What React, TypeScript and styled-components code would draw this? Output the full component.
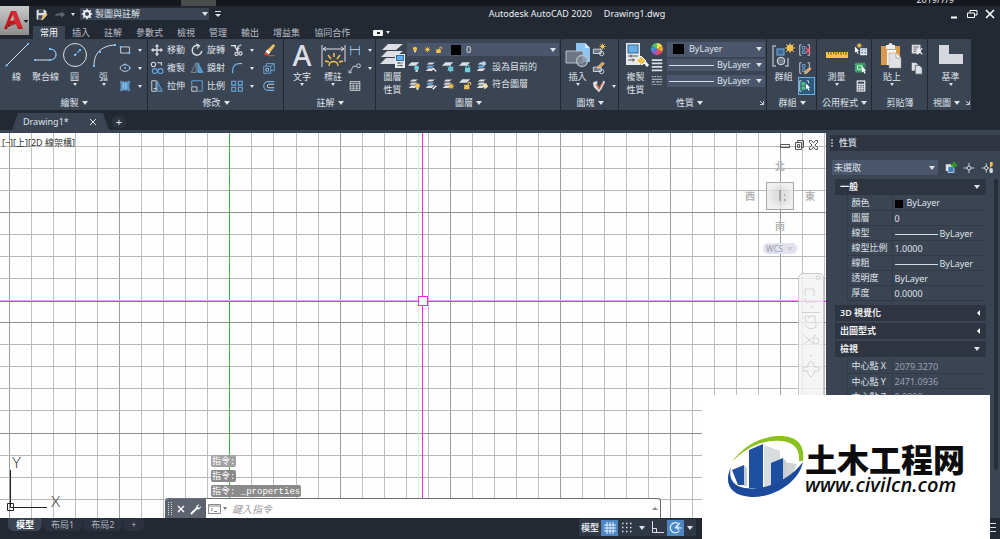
import React from 'react';
import styled, { createGlobalStyle, css } from 'styled-components';

const color = {
  chrome: '#222933',
  panel: '#3b4453',
  section: '#2e3541',
  combo: '#4a566b',
  text: '#dfe3e9',
  dim: '#9aa2ae',
  blue: '#69aee6',
  white: '#dcdfe3',
  gold: '#f2c14e',
};

const Global = createGlobalStyle`
  * { box-sizing: border-box; }
  body { margin: 0; background: ${color.chrome}; }
  body, button, select, input {
    font-family: "Noto Sans", "Noto Sans CJK TC", sans-serif;
    font-size: 9px;
    line-height: 12px;
    color: ${color.text};
  }
  button, select, input { margin: 0; padding: 0; border: 0; background: none; outline: 0; }
`;

/* ---------- icon artwork ---------- */

const W = color.white;
const B = color.blue;
const G = color.gold;

const Sheets = ({ mid = W, blue = false }: { mid?: string; blue?: boolean }) => (
  <g>
    <path d="M5 9.500h7l-3 3H2z" fill={W} />
    <path d="M5 6h7l-3 3H2z" fill={blue ? B : mid} stroke={color.panel} strokeWidth=".6" />
    <path d="M6 2.500h7l-3.500 3H2.500z" fill={W} stroke={color.panel} strokeWidth=".6" />
  </g>
);
const Sheet = () => <path d="M5 2.500h9l-4 4H1z" fill={W} />;
const Bulb = ({ x = 0, y = 0, c = G }: { x?: number; y?: number; c?: string }) => (
  <g transform={`translate(${x} ${y})`}>
    <circle cx="3" cy="3" r="2.800" fill={c} />
    <path d="M1.700 5.400h2.600v2.200H1.700z" fill="#e8e2d0" />
  </g>
);
const Sun = ({ x, y, r = 2 }: { x: number; y: number; r?: number }) => (
  <g transform={`translate(${x} ${y})`} stroke={G} strokeWidth="1">
    <circle r={r} fill={G} />
    <path d={`M0 ${-r - 2}V${r + 2}M${-r - 2} 0H${r + 2}M${-r - 1} ${-r - 1}L${r + 1} ${r + 1}M${r + 1} ${-r - 1}L${-r - 1} ${r + 1}`} />
  </g>
);
const Lock = ({ x, y, c = G, open = false }: { x: number; y: number; c?: string; open?: boolean }) => (
  <g transform={`translate(${x} ${y})`}>
    <rect y="3" width="6" height="5" fill={c} />
    <path d={open ? 'M4.500 3V1.500a1.500 1.500 0 0 1 3 0V3' : 'M1.300 3V1.800a1.700 1.700 0 0 1 3.400 0V3'} fill="none" stroke={c} strokeWidth="1.200" />
  </g>
);
const Dot = ({ x, y }: { x: number; y: number }) => <rect x={x - 1} y={y - 1} width="2" height="2" fill="#6fc0ff" />;
const Cursor = ({ x, y }: { x: number; y: number }) => (
  <path transform={`translate(${x} ${y})`} d="M0 0l5 5H3l1.300 3-1.200.5L1.800 5.600 0 7z" fill="#fff" />
);
const Pencil = ({ x, y }: { x: number; y: number }) => (
  <path transform={`translate(${x} ${y})`} d="M6 0l2 2-5 5-2.500.700L1 5z" fill="#e8a14a" stroke="#fff" strokeWidth=".5" />
);

const art: Record<string, React.ReactNode> = {
  // 26 x 26 artwork
  line: <g><path d="M3 23L24 2" stroke={W} /><Dot x={2.5} y={23.5} /><Dot x={24} y={2} /></g>,
  polyline: <g fill="none"><path d="M2 18h15c8 0 8-11 0-11" stroke={W} /><path d="M17 18c8 0 8-11 0-11" stroke={B} /><Dot x={2} y={18} /><Dot x={17} y={18} /><Dot x={17} y={7} /></g>,
  circle: <g fill="none"><circle cx="13" cy="13" r="11.500" stroke={W} /><path d="M13 13l5-5" stroke={B} strokeWidth="1.500" strokeDasharray="2 1.500" /><Dot x={13} y={13} /><Dot x={18} y={8} /></g>,
  arc: <g fill="none"><path d="M3 24C3 12 9 4 24 3" stroke={W} /><Dot x={3} y={24} /><Dot x={9} y={10} /><Dot x={24} y={3} /></g>,
  textA: <text x="13" y="24" textAnchor="middle" fontFamily="Noto Sans" fontSize="29" fontWeight="500" fill={W}>A</text>,
  dim: <g fill="none" stroke={W}><path d="M2 3v22M25 3v17M3 7h21M6 5L3 7l3 2M21 5l3 2-3 2" /><path d="M14 11v4M8 13l3 4M20 13l-3 4M5 19l4 1M23 19l-4 1M9 24c0-6 9-6 9 0" stroke={G} strokeWidth="1.500" /></g>,
  layers: <g><path d="M7 15h18l-8 7H0z" fill={W} /><path d="M7 8.500h17l-8 7H0z" fill={W} stroke={color.panel} /><path d="M8 1.500h16l-8 7H1z" fill={W} stroke={color.panel} /><rect x="15" y="12" width="10" height="14" fill="#e9eef3" /><rect x="16.500" y="13.500" width="7" height="5" fill={B} stroke="#2a6db0" /><path d="M17 21h6M17 23.500h6M19 20v2M21 22.500v2" stroke="#555" strokeWidth=".8" /></g>,
  insert: <g><path d="M11 1h9l5 5v14H11z" fill="#8ec5f2" /><path d="M20 1v5h5" fill="#d3e8fa" /><path d="M1 9h17v12H1z" fill="#6d7685" stroke="#b9bec6" /><circle cx="17" cy="19" r="5.500" fill="#8089969c" stroke="#b9bec6" strokeWidth="1.300" /></g>,
  match: <g><rect x="3" y="1" width="14" height="22" fill="#e6e8ea" /><rect x="5" y="3" width="10" height="8" fill={B} stroke="#2f6a9c" /><path d="M5 14h10M5 18h7M8 12.500v3M10 16.500v3" stroke="#555" /><path d="M18 18l6 7 2-2-6-7z" fill="#fff" /><path d="M13 19l5-5 5 5-4 4z" fill={G} stroke="#fff" /></g>,
  group: <g fill="none"><path d="M5 4H2v20h3M14 24h3V16" stroke="#aeb4bd" strokeWidth="1.400" /><rect x="6" y="7" width="7" height="6" fill="#41698f" stroke={B} /><circle cx="10" cy="19" r="3.800" fill="#6d7685" stroke={W} /><Sun x={19} y={6} r={3} /></g>,
  ruler: <g><rect x="2" y="10" width="22" height="6" fill={G} /><path d="M4.500 10v2M7 10v3M9.500 10v2M12 10v3M14.500 10v2M17 10v3M19.500 10v2M22 10v3" stroke="#7a5a12" /></g>,
  paste: <g><path d="M2 4h19v19H2z" fill="#d99a4c" /><path d="M7 3h2.500a2 2 0 0 1 4 0H16v4H7z" fill="#eceef0" /><path d="M8 8h9v15H8z" fill="#f6f6f6" /><path d="M10 11h7l5 5v10H10z" fill="#dfe1e4" stroke="#999" strokeWidth=".5" /><path d="M17 11v5h5" fill="#fff" stroke="#aaa" /></g>,
  base: <path d="M1 3h10v9h14v10H1z" fill="#d5d8dc" />,
  // 16 x 16 artwork
  rect: <g fill="none"><path d="M3 4.500h10v7H3z" stroke={W} /><Dot x={3} y={4.5} /><Dot x={13} y={11.5} /></g>,
  ellipse: <g fill="none"><ellipse cx="8" cy="8" rx="5.500" ry="3.800" stroke={W} /><Dot x={8} y={8} /><Dot x={13.5} y={8} /><Dot x={8} y={4} /></g>,
  hatch: <g><rect x="4" y="4" width="8" height="8" fill="#5b9bd0" /><path d="M3.500 2v12M12.500 2v12M2 3.500h12M2 12.500h12" stroke={B} /><path d="M6 4v8M9 4v8" stroke="#a9d2f3" /></g>,
  move: <path d="M8 1l2.500 3H8.800v3.200H12V5.500L15 8l-3 2.500V8.800H8.800V12h1.700L8 15l-2.500-3h1.700V8.800H4v1.700L1 8l3-2.500v1.700h3.200V4H5.500z" fill={W} />,
  rotate: <g fill="none" stroke={W} strokeWidth="1.600"><path d="M10 3.200A5.500 5.500 0 1 0 13.500 9" /><path d="M7 .800l4 2.200-3 3.500" strokeWidth="1.200" /></g>,
  trim: <g stroke={W} strokeWidth="1.300" fill="none"><path d="M1 3h6M13 2l-4 2v6M5 3l4 7M6 6h5" /><circle cx="7.500" cy="12.500" r="1.800" /><circle cx="12" cy="12" r="1.800" /></g>,
  eraser: <g><path d="M13 1l2 2-6 8-3-3z" fill="#efc060" /><path d="M6 7.500l3.500 3-2 2.500-3.500-3z" fill="#fff" /><path d="M4 10l3.500 3L5 14.500 2.500 13z" fill="#e34b3d" /><path d="M7 14.500h7" stroke="#d06a50" /></g>,
  copy: <g fill="none" strokeWidth="1.200"><circle cx="4" cy="4" r="2.500" stroke={W} /><path d="M8.500 2H13v3" stroke={W} /><circle cx="5.500" cy="11.500" r="2.800" stroke={B} /><circle cx="12" cy="11.500" r="2.800" stroke={B} /></g>,
  mirror: <g fill="none"><path d="M7 2v11H1.500z" stroke="#8d96a3" /><path d="M9 2v11h5.500z" fill="#4f92c9" stroke={B} /></g>,
  fillet: <g fill="none"><path d="M3 14V11C3 6 6 3 10 3" stroke={B} strokeWidth="1.400" /><path d="M10 3h4" stroke={W} /></g>,
  box3: <g fill="none" stroke={B}><path d="M2 6h8v8H2zM5 6V3h9v8h-4M10 6l4-3" /><path d="M4.500 8.500h3v3h-3z" stroke="#9dc9ee" /></g>,
  stretch: <g fill="none"><path d="M2 2h5v12H2z" stroke={W} /><path d="M8 2l6 12H8z" stroke={B} fill="#40607f" /><path d="M4 11h4" stroke={W} /></g>,
  scale: <g fill="none"><path d="M2 8V2h12v12H9" stroke={B} /><path d="M2 9h6v5H2z" stroke={W} /></g>,
  array: <g fill="none" stroke={B} strokeWidth="1.200"><path d="M2 2.500h4.500V7H2zM9.500 2.500H14V7H9.500zM2 9.500h4.500V14H2zM9.500 9.500H14V14H9.500z" /></g>,
  offset: <g fill="none"><path d="M14 3H7a5 5 0 0 0 0 10h7" stroke={B} strokeWidth="1.300" /><path d="M14 6H8a2 2 0 0 0 0 4h6" stroke={W} /></g>,
  linear: <g fill="none"><path d="M3 3v11M13 3v11" stroke={B} strokeWidth="1.300" /><path d="M3 7.500h10" stroke={W} /></g>,
  leader: <g fill="none" stroke={W}><path d="M2 13L6 6h4" /><circle cx="12" cy="5.500" r="2.200" /><path d="M1 10.500L1.500 14l3-1.500" /></g>,
  table: <g fill="none" stroke={W}><path d="M2.500 3h11v10h-11z" /><path d="M2.500 5h11M2.500 8h11M2.500 10.500h11M6 5v8M10 5v8" strokeWidth=".8" /></g>,
  lyOff: <g><Sheet /><Bulb x={8} y={6} c="#6fd0e0" /></g>,
  lyIso: <g><Sheets blue /><path d="M10 9l4 4" stroke="#fff" strokeWidth="1.500" /></g>,
  lyFrz: <g><Sheet /><g stroke="#6fd0e0"><circle cx="11" cy="10" r="2.200" fill="none" strokeWidth="1.500" /><path d="M11 6v8M7.500 8l7 4M14.500 8l-7 4" /></g></g>,
  lyLock: <g><Sheet /><Lock x={8} y={6} c="#6fd0e0" /></g>,
  lySet: <g><Sheets blue /><circle cx="10" cy="4" r="2.500" fill="#a9d2f3" /></g>,
  lyOn: <g><Sheets /><Bulb x={9} y={7} /></g>,
  lyUniso: <g><Sheets blue /><path d="M10 14l4-4" stroke="#fff" strokeWidth="1.500" /></g>,
  lyThaw: <g><Sheets /><Sun x={11.5} y={10.5} r={1.5} /></g>,
  lyUnlock: <g><Sheet /><Lock x={7} y={6} open /></g>,
  lyMatch: <g><Sheets /><path d="M9 8l4-1 2 4-4 3z" fill="#efe2a8" /></g>,
  bulb: <Bulb x={5} y={3.5} />,
  sun: <Sun x={8} y={8} />,
  unlock: <Lock x={3} y={4} open />,
  create: <g><path d="M1.500 7h9v5h-9z" fill="#6d7685" stroke={W} /><circle cx="11" cy="12" r="2.500" fill="none" stroke={W} /><Sun x={12} y={4} r={1.5} /></g>,
  editBlock: <g><path d="M1.500 7h9v5h-9z" fill="#6d7685" stroke={W} /><circle cx="11" cy="12" r="2.500" fill="none" stroke={W} /><Pencil x={6} y={1} /></g>,
  attr: <g><path d="M1 4l5-2v5l3 3 4-8 2 1-4 8-3 4-6-6z" fill={W} /><path d="M5 6l3 5 4-7" fill="none" stroke="#d0563a" strokeWidth="1.500" /></g>,
  wheel: <g><path d="M8 8V1a7 7 0 0 1 6 3.500z" fill="#f0e04a" /><path d="M8 8l6-3.500a7 7 0 0 1 0 7z" fill="#f39a3a" /><path d="M8 8l6 3.500A7 7 0 0 1 8 15z" fill="#e34b5b" /><path d="M8 8v7a7 7 0 0 1-6-3.500z" fill="#9a56d6" /><path d="M8 8l-6 3.500a7 7 0 0 1 0-7z" fill="#3f8fe0" /><path d="M8 8L2 4.500A7 7 0 0 1 8 1z" fill="#4cc36a" /></g>,
  weights: <path d="M2 2.500h12M2 6h12M2 10h12M2 14.200h12" stroke={W} strokeWidth="2" />,
  types: <g stroke={W}><path d="M2 3h12" strokeDasharray="2 1" /><path d="M2 6h12" /><path d="M2 9h12" strokeDasharray="4 1" /><path d="M2 12h12" strokeDasharray="1 1" /></g>,
  ungroup: <g fill="none"><path d="M4 2H2v12h2M11 2h2v12h-2" stroke={W} /><path d="M5 4h3v3H5zM5 9h3v3H5z" stroke={B} /><path d="M9 5l5 7M14 5l-5 7" stroke="#e8586a" strokeWidth="1.600" /></g>,
  groupEdit: <g fill="none"><path d="M4 2H2v12h2M11 2h2v5" stroke={W} /><path d="M5 4h3v3H5zM5 9h3v3H5z" stroke={B} /><Pencil x={7} y={7} /></g>,
  groupSel: <g fill="none"><path d="M4 2H2v12h2M10 2h2v3" stroke={W} /><path d="M4.500 4h3v3h-3zM4.500 9h3v3h-3z" fill="#3fae6d" stroke="#58d18c" /><Cursor x={9} y={5} /></g>,
  quickSel: <g><Cursor x={1} y={4} /><path d="M7 6h8v8H7z" fill="#e6e8ea" /><path d="M8.500 8h2M12 8h2M8.500 11h2M12 11h2" stroke="#3b7fc0" strokeWidth="1.300" /><Sun x={6} y={3} r={1} /></g>,
  selAll: <g><path d="M2 3h9v9H2z" fill="#3fae6d" /><path d="M4 5.500h5v4H4z" fill="none" stroke="#c9f5da" /><path d="M1.500 2.500h11v10h-11z" fill="none" stroke="#58d18c" strokeDasharray="2 1" /><Cursor x={9} y={6} /></g>,
  calc: <g><rect x="3" y="1.500" width="10" height="13" fill={W} /><path d="M4.500 3h7v2.500h-7z" fill="#4b5362" /><path d="M4.500 7.500h7M4.500 10h7M4.500 12.500h7" stroke="#4b5362" strokeDasharray="1.500 1.200" strokeWidth="1.400" /></g>,
  cut: <g><path d="M2 2h10v10H2z" fill={W} /><path d="M4 4.500h6M4 7h4M4 9.500h3" stroke="#555" /><path d="M14 6l-6 7M9 7l5 6" stroke="#fff" strokeWidth="1.200" /></g>,
  copyClip: <g><path d="M2 2h5l3 3v6H2z" fill={W} /><path d="M6 5h5l3 3v7H6z" fill={W} stroke={color.panel} strokeWidth=".8" /></g>,
  save: <g><path d="M2 2h10l2 2v5l-5 5H2z" fill={W} /><path d="M4.500 2h6v4h-6zM4 9h6v5H4z" fill="#444c59" /><path d="M10 9l3.500-3 1.500 2-5 6-2 .5z" fill="#f4b95c" stroke="#fff" strokeWidth=".4" /></g>,
  redo: <path d="M2 11c1-4 4-5 8-4.500V4l5 4-5 4V9.500C7 9 4 9.500 2 11z" fill="#5c6470" />,
  gear: <g><circle cx="8" cy="8" r="4" fill="none" stroke="#eef0f3" strokeWidth="2.600" /><path d="M8 1v3M8 12v3M1 8h3M12 8h3M3 3l2 2M11 11l2 2M13 3l-2 2M5 11l-2 2" stroke="#eef0f3" strokeWidth="2" /></g>,
  pickAdd: <g><path d="M1 3h9v9H1z" fill={W} /><path d="M4 6h8v8H4z" fill="#3b7fc0" stroke={W} /><path d="M12 0v8M8 4h8" stroke="#2f9a2a" strokeWidth="3" /></g>,
  target: <g fill="none" stroke={W} strokeWidth="1.200"><circle cx="8" cy="8" r="2.500" /><path d="M8 1v4.500M8 10.500V15M1 8h4.500M10.500 8H15" /></g>,
  targetF: <g fill="none" stroke={W} strokeWidth="1.200"><circle cx="7" cy="8" r="2.300" /><path d="M7 2v4M7 10v4M1 8h4M9 8h2" /><path d="M12 0h4l-1 3h2l-5 5z" fill={G} stroke="none" /><path d="M12 9h3v5h-3z" fill={W} /></g>,
};

const Svg = styled.svg<{ $s: number }>`
  display: block;
  flex: none;
  width: ${(p) => p.$s}px;
  height: ${(p) => p.$s}px;
  overflow: visible;
`;
const Icon = ({ name, size = 14, box = 16 }: { name: string; size?: number; box?: number }) => (
  <Svg $s={size} viewBox={`0 0 ${box} ${box}`} aria-hidden="true">{art[name]}</Svg>
);

const Caret = styled.span<{ $small?: boolean }>`
  flex: none;
  width: 0;
  height: 0;
  border: solid transparent;
  border-width: ${(p) => (p.$small ? '3px 2px 0' : '4px 3px 0')};
  border-top-color: ${color.text};
`;
const CaretLeft = styled.span`
  width: 0;
  height: 0;
  border: solid transparent;
  border-width: 3px 3px 3px 0;
  border-right-color: #fff;
`;

/* ---------- page frame ---------- */

const Page = styled.div`
  position: relative;
  display: flex;
  flex-direction: column;
  min-height: 100vh;
  overflow: hidden;
`;
const Desktop = styled.div`
  display: flex;
  align-items: flex-end;
  height: 6px;
  padding: 0 46px 1px 181px;
  background: #14181e;
  overflow: hidden;
  span { margin-left: auto; font-size: 9px; line-height: 10px; color: #e6e6e6; }
  &::before { content: ''; align-self: stretch; width: 35px; background: #4a4c4e; margin-bottom: -1px; }
`;
const Header = styled.header`
  display: grid;
  grid-template-columns: 29px 1fr;
  height: 33px;
  background: ${color.chrome};
`;
const AppButton = styled.button`
  display: flex;
  align-items: center;
  align-self: start;
  height: 29px;
  padding-left: 1px;
  background: linear-gradient(#c9c9c9, #8d8d8d);
`;
const QuickBar = styled.div`
  display: flex;
  align-items: center;
  height: 16px;
  padding: 0 4px 0 6px;
  gap: 5px;
`;
const IconButton = styled.button`
  display: flex;
  align-items: center;
  justify-content: center;
  gap: 3px;
`;
const Workspace = styled.label`
  display: flex;
  align-items: center;
  width: 129px;
  height: 12px;
  padding: 0 1px;
  gap: 2px;
  background: ${color.panel};
`;
const Select = styled.select`
  appearance: none;
  flex: 1;
  min-width: 0;
  height: 12px;
`;
const Title = styled.h1`
  flex: 1;
  display: flex;
  justify-content: center;
  gap: 12px;
  margin: 0;
  padding-right: 16px;
  font-size: 9px;
  font-weight: 400;
  line-height: 16px;
  color: #eef0f3;
`;
const WindowButtons = styled.div`
  display: flex;
  align-items: center;
  gap: 6px;
`;
const TabRow = styled.nav`
  display: flex;
  height: 13px;
  margin-top: 4px;
  padding-left: 4px;
`;
const RibbonTab = styled.button<{ $active?: boolean }>`
  padding: 0 7px;
  line-height: 13px;
  color: ${(p) => (p.$active ? '#fff' : '#b9bfc8')};
  background: ${(p) => (p.$active ? color.panel : 'none')};
`;
const TabExtra = styled(IconButton)`margin-left: 16px;`;

/* ---------- ribbon ---------- */

const Ribbon = styled.div`
  display: grid;
  grid-template-columns: 148px 136px 92px 185px 58px 148px 50px 55px 56px 44px;
  height: 70px;
  background: ${color.chrome};
`;
const Panel = styled.section`
  display: flex;
  flex-direction: column;
  background: ${color.panel};
  border-right: 1px solid ${color.chrome};
  padding-left: 1px;
`;
const PanelBody = styled.div`
  display: flex;
  flex: 1;
  padding: 2px 0 0 1px;
`;
const PanelFoot = styled.div`
  display: flex;
  align-items: center;
  justify-content: center;
  gap: 3px;
  height: 14px;
  line-height: 14px;
  padding: 0 2px;
  white-space: nowrap;
`;
const Launcher = styled.span`
  flex: none;
  width: 4px;
  height: 4px;
  border: solid #c6ccd5;
  border-width: 0 1px 1px 0;
  background: linear-gradient(45deg, transparent 40%, #c6ccd5 40% 60%, transparent 60%);
`;
const Push = styled.span`margin-left: auto;`;
const BigTool = styled.button<{ $w?: number }>`
  display: flex;
  flex-direction: column;
  align-items: center;
  flex: none;
  width: ${(p) => p.$w ?? 29}px;
  padding-top: 1px;
  line-height: 13px;
  white-space: nowrap;
  svg { margin-bottom: 2px; }
`;
const Stack = styled.div<{ $row?: number; $w?: number }>`
  display: grid;
  align-content: start;
  grid-auto-rows: ${(p) => p.$row ?? 18}px;
  flex: none;
  width: ${(p) => (p.$w ? `${p.$w}px` : 'auto')};
`;
const Tool = styled.button<{ $boxed?: boolean }>`
  display: flex;
  align-items: center;
  gap: 3px;
  white-space: nowrap;
  ${(p) => p.$boxed && css`
    background: #2d5a78;
    box-shadow: inset 0 0 0 1px ${color.blue};
  `}
`;
const Row = styled.div`
  display: flex;
  align-items: center;
  gap: 3px;
`;
const Combo = styled.label<{ $h: number }>`
  display: flex;
  align-items: center;
  align-self: center;
  gap: 1px;
  height: ${(p) => p.$h}px;
  padding: 0 3px 0 2px;
  background: ${color.combo};
  overflow: hidden;
`;
const Swatch = styled.span<{ $s: number }>`
  flex: none;
  width: ${(p) => p.$s}px;
  height: ${(p) => Math.min(p.$s, 10)}px;
  margin: 0 4px;
  background: #000;
`;
const Stroke = styled.span<{ $w: number }>`
  display: inline-block;
  vertical-align: middle;
  flex: none;
  width: ${(p) => p.$w}px;
  height: 1px;
  margin-right: 2px;
  background: #d8dce2;
`;

const Big = ({ icon, label, caret, w }: { icon: string; label: React.ReactNode; caret?: boolean; w?: number }) => (
  <BigTool $w={w} type="button">
    <Icon name={icon} size={26} box={26} />
    {label}
    {caret && <Caret $small />}
  </BigTool>
);
const Small = ({ icon, label, caret, boxed, size }: { icon: string; label?: string; caret?: boolean; boxed?: boolean; size?: number }) => (
  <Tool type="button" $boxed={boxed} aria-label={label ?? icon}>
    <Icon name={icon} size={size} />
    {label}
    {caret && <><span /><Caret $small /></>}
  </Tool>
);
const Foot = ({ children, launcher, flat }: { children: string; launcher?: boolean; flat?: boolean }) => (
  <PanelFoot>
    {launcher && <Push />}
    {children}
    {!flat && <Caret />}
    {launcher && <><Push /><Launcher /></>}
  </PanelFoot>
);

/* ---------- drawing area ---------- */

const FileTabs = styled.div`
  display: flex;
  align-items: flex-end;
  height: 24px;
  padding-left: 12px;
  border-bottom: 3px solid ${color.panel};
`;
const FileTab = styled.div`
  display: flex;
  align-items: center;
  justify-content: space-between;
  width: 97px;
  height: 17px;
  padding: 0 12px 0 11px;
  background: ${color.panel};
  clip-path: polygon(0 100%, 6px 0, 91px 0, 100% 100%);
`;
const PlusTab = styled.button`
  width: 14px;
  height: 12px;
  margin: 0 0 2px 3px;
  border-radius: 5px;
  background: #2c333e;
  font-size: 11px;
`;
const Work = styled.div`
  display: flex;
  flex: 1;
`;
const Canvas = styled.main`
  position: relative;
  flex: 1;
  background: #fefefe;
  overflow: hidden;
  color: #333;
`;
const Sheet2D = styled.svg`
  position: absolute;
  inset: 0;
  width: 100%;
  height: 100%;
`;
const ViewLabel = styled.div`
  position: absolute;
  left: 2px;
  top: 4px;
`;
const ViewControls = styled.svg`
  position: absolute;
  right: 7px;
  top: 6px;
  width: 40px;
  height: 12px;
`;
const Compass = styled.div`
  position: absolute;
  right: 6px;
  top: 26px;
  display: grid;
  grid-template-columns: 20px 40px 20px;
  grid-template-rows: 14px 46px 14px 10px 11px;
  place-items: center;
  font-size: 10px;
  font-weight: 700;
  color: #b4b4b4;
  span:first-child, span:nth-child(5) { grid-column: 1 / 4; }
`;
const CubeFace = styled.button`
  width: 28px;
  height: 28px;
  border: 1px solid #a9a9a9;
  background: radial-gradient(#d6d6d6cc 30%, #ececeecc 70%);
  color: #8f8f8f;
  svg { margin: auto; }
`;
const Wcs = styled.button`
  grid-column: 1 / 4;
  grid-row: 5;
  display: flex;
  align-items: center;
  gap: 4px;
  height: 11px;
  padding: 0 4px 0 3px;
  border-radius: 5px;
  background: #e2e3ee;
  color: #9a9ca8;
  font-size: 8px;
  span { border-top-color: #c9cad6; }
`;
const NavBar = styled.div`
  position: absolute;
  right: 2px;
  top: 140px;
  bottom: 60px;
  width: 26px;
  border: 1px solid #c9c9c9;
  border-radius: 5px;
  background: #f2f2f2cc;
`;
const History = styled.div`
  position: absolute;
  left: 211px;
  bottom: 21px;
  display: flex;
  flex-direction: column;
  align-items: flex-start;
  gap: 3px;
  font-family: "Liberation Mono", "Noto Sans CJK TC", monospace;
  white-space: pre;
  color: #fff;
  span { height: 12px; padding: 0 1px; border-radius: 2px; background: #8a8a8a; line-height: 14px; }
  span:first-child { background: #a2a2a2; }
`;
const CommandLine = styled.form`
  position: absolute;
  left: 165px;
  right: 165px;
  bottom: 0;
  display: flex;
  height: 20px;
  border: 1px solid #6b6f76;
  border-width: 1px 1px 0 0;
  border-radius: 3px 3px 0 0;
  background: #fff;
  overflow: hidden;
`;
const Grip = styled.div`
  display: flex;
  align-items: center;
  justify-content: space-between;
  width: 41px;
  padding: 0 4px 0 3px;
  background: #5d6470;
`;
const GripDots = styled.svg`
  width: 4px;
  height: 13px;
`;
const CommandInput = styled.input`
  flex: 1;
  min-width: 0;
  font-style: italic;
  font-size: 10px;
  color: #333;
  &::placeholder { color: #9a9a9a; opacity: 1; }
`;
const Prompt = styled.button`
  display: flex;
  align-items: center;
  gap: 2px;
  padding: 0 5px 0 2px;
  span { border-top-color: #777; }
`;
const Up = styled.span`
  align-self: center;
  margin-right: 2px;
  border: solid transparent;
  border-width: 0 3px 3px;
  border-bottom-color: #888;
`;

// Every fifth grid line is drawn darker.
const gridX = Array.from({ length: 90 }, (_, i) => ({ at: Math.round(9 + i * 22.04), major: i % 5 === 0 }));
const gridY = Array.from({ length: 60 }, (_, i) => ({ at: Math.round(13 + i * 22.04), major: i % 5 === 3 }));

const Drawing = () => (
  <Sheet2D>
    <g shapeRendering="crispEdges">
      {gridX.map((l) => <rect key={l.at} x={l.at} y="0" width="1" height="100%" fill={l.major ? '#9a9d9f' : '#bebec0'} />)}
      {gridY.map((l) => <rect key={l.at} x="0" y={l.at} width="100%" height="1" fill={l.major ? '#8e8e8e' : '#b8b8b8'} />)}
      <rect x="229" y="0" width="1" height="100%" fill="#45ad45" />
      <rect x="418" y="0" width="1" height="100%" fill="#d3f5cc" />
      <rect x="422" y="0" width="1" height="100%" fill="#ea2cea" />
      <rect x="0" y="167" width="100%" height="1" fill="#f4a8f4" />
      <rect x="0" y="168" width="100%" height="1" fill="#ea2cea" />
      <rect x="418" y="163" width="10" height="10" fill="#ea2cea" />
      <rect x="419" y="164" width="8" height="8" fill="#fff" />
    </g>
  </Sheet2D>
);
const Ucs = styled.svg`
  position: absolute;
  left: 0;
  bottom: 6px;
  width: 66px;
  height: 56px;
  overflow: visible;
`;

/* ---------- properties palette ---------- */

const Palette = styled.aside`
  display: flex;
  flex-direction: column;
  width: 174px;
  padding: 2px 0 0 4px;
  background: ${color.panel};
`;
const PaletteTitle = styled.h2`
  display: flex;
  align-items: center;
  gap: 4px;
  height: 16px;
  margin: 0 0 9px;
  padding-left: 1px;
  background: ${color.section};
  font-size: 9px;
  font-weight: 500;
  &::before { content: ''; width: 2px; height: 8px; border-left: 2px dotted #8c94a1; }
`;
const Selection = styled.div`
  display: flex;
  align-items: center;
  gap: 6px;
  padding: 0 7px 0 2px;
  margin-bottom: 4px;
`;
const SelectionBox = styled(Combo)`
  flex: 1;
  margin-right: 1px;
`;
const PaletteScroll = styled.div`
  display: flex;
  flex: 1;
  gap: 8px;
  padding: 0 2px 48px 5px;
`;
const Groups = styled.div`flex: 1;`;
const Thumb = styled.div`
  width: 4px;
  border-radius: 2px;
  background: #262d38;
`;
const GroupHead = styled.button`
  display: flex;
  align-items: center;
  justify-content: space-between;
  width: 100%;
  height: 16px;
  margin-bottom: 2px;
  padding: 0 6px 0 5px;
  background: ${color.section};
  color: #eef0f3;
  font-weight: 600;
  &:first-child { margin-bottom: 0; }
`;
const Props = styled.table<{ $dim?: boolean }>`
  width: 100%;
  margin-bottom: 4px;
  border-collapse: collapse;
  table-layout: fixed;
  white-space: nowrap;
  th, td { height: 15px; padding: 1px 0 0 4px; border: solid #323a46; border-width: 0 0 1px 1px; text-align: left; font-weight: 400; line-height: 13px; }
  th { padding: 0 0 0 4px; }
  td { color: ${(p) => (p.$dim ? color.dim : color.text)}; padding-left: 2px; }
  tr > td:first-child { width: 12px; border: 0; }
  th { width: 45px; overflow: hidden; }
`;

const PropTable = ({ rows, dim }: { rows: [string, React.ReactNode][]; dim?: boolean }) => (
  <Props $dim={dim}>
    <tbody>
      {rows.map(([k, v]) => <tr key={k}><td /><th scope="row">{k}</th><td>{v}</td></tr>)}
    </tbody>
  </Props>
);
const SmallSwatch = styled.span`
  display: inline-block;
  width: 8px;
  height: 8px;
  margin-right: 4px;
  background: #000;
  vertical-align: middle;
`;

/* ---------- status bar ---------- */

const Status = styled.footer`
  display: flex;
  align-items: flex-start;
  height: 21px;
  padding: 0 4px 0 8px;
  background: ${color.chrome};
`;
const LayoutTab = styled.button<{ $active?: boolean }>`
  height: 13px;
  margin-right: 1px;
  padding: 0 8px;
  border-radius: 0 0 6px 6px;
  background: ${(p) => (p.$active ? '#3b4453' : '#2b323d')};
  color: ${(p) => (p.$active ? '#fff' : '#aeb5bf')};
  font-weight: ${(p) => (p.$active ? 700 : 400)};
`;
const Modes = styled.div`
  display: flex;
  align-items: center;
  height: 17px;
  margin: 1px 288px 0 auto;
  background: #303845;
`;
const Mode = styled.button<{ $on?: boolean; $w?: number }>`
  display: flex;
  align-items: center;
  justify-content: center;
  width: ${(p) => p.$w ?? 17}px;
  height: 16px;
  background: ${(p) => (p.$on ? '#4a87c4' : 'none')};
  font-weight: 600;
`;
const Watermark = styled.a`
  position: absolute;
  right: 10px;
  bottom: 0;
  display: flex;
  align-items: center;
  width: 288px;
  height: 144px;
  padding: 4px 0 0 25px;
  background: #fff;
  color: #0c0c0c;
  text-decoration: none;
`;
const Brand = styled.span`
  display: flex;
  flex-direction: column;
  font-style: italic;
  font-size: 20px;
  font-weight: 600;
  line-height: 22px;
  white-space: nowrap;
  font-family: "Open Sans", sans-serif;
  strong { font: 900 32px/32px "Noto Sans CJK SC", sans-serif; }
`;

const ribbonTabs = ['常用', '插入', '註解', '參數式', '檢視', '管理', '輸出', '增益集', '協同合作'];

export default function App() {
  return (
    <Page>
      <Global />
      <Desktop><span>2019/7/9</span></Desktop>
      <Header>
        <AppButton type="button" aria-label="AutoCAD">
          <Svg $s={28} viewBox="0 0 28 28">
            <path d="M3 22L10 4h5l7 18h-5l-2-5-8 1-1 4z" fill="#c2181d" />
            <path d="M9 14l3-7 2 6z" fill="#b9b9b9" />
            <path d="M10 4l4 13 8 5-7-18z" fill="#e0343a" opacity=".6" />
            <path d="M3 22l6-3 6-2-8 1-1 4z" fill="#7d0f13" />
            <path d="M22.500 13h5l-2.500 3z" fill="#222" />
          </Svg>
        </AppButton>
        <div>
          <QuickBar>
            <IconButton type="button" aria-label="儲存"><Icon name="save" size={13} /></IconButton>
            <IconButton type="button" aria-label="重做"><Icon name="redo" size={13} /></IconButton>
            <Caret $small />
            <Workspace>
              <Icon name="gear" size={12} />
              <Select aria-label="工作區"><option>製圖與註解</option></Select>
              <Caret />
            </Workspace>
            <Svg $s={8} viewBox="0 0 8 8"><path d="M1 1.500h6" stroke={W} /><path d="M1 4h6L4 7z" fill={W} /></Svg>
            <Title><span>Autodesk AutoCAD 2020</span><span>Drawing1.dwg</span></Title>
            <WindowButtons>
              <IconButton type="button" aria-label="最小化"><Svg $s={12} viewBox="0 0 12 12"><path d="M3 9.500h6" stroke="#fff" strokeWidth="2" /></Svg></IconButton>
              <IconButton type="button" aria-label="還原"><Svg $s={12} viewBox="0 0 12 12"><path d="M4 4.500V2.500h7v4.500H9M1.500 5h7v4.500h-7z" fill="none" stroke="#fff" /></Svg></IconButton>
              <IconButton type="button" aria-label="關閉"><Svg $s={12} viewBox="0 0 12 12"><path d="M2 2l8 8M10 2l-8 8" stroke="#fff" strokeWidth="1.600" /></Svg></IconButton>
            </WindowButtons>
          </QuickBar>
          <TabRow>
            {ribbonTabs.map((t, i) => <RibbonTab key={t} type="button" $active={i === 0}>{t}</RibbonTab>)}
            <TabExtra type="button" aria-label="功能區選項">
              <Svg $s={10} viewBox="0 0 10 10"><rect y="2" width="10" height="6" rx="1" fill="#f2f3f5" /><rect x="4" y="4" width="3" height="2" fill={color.chrome} /></Svg>
              <Caret $small />
            </TabExtra>
          </TabRow>
        </div>
      </Header>

      <Ribbon>
        <Panel>
          <PanelBody>
            <Big icon="line" label="線" />
            <Big icon="polyline" label="聚合線" />
            <Big icon="circle" label="圓" caret />
            <Big icon="arc" label="弧" caret />
            <Stack>
              <Small icon="rect" caret />
              <Small icon="ellipse" caret />
              <Small icon="hatch" caret />
            </Stack>
          </PanelBody>
          <Foot>繪製</Foot>
        </Panel>
        <Panel>
          <PanelBody>
            <Stack $w={40}>
              <Small icon="move" label="移動" /><Small icon="copy" label="複製" /><Small icon="stretch" label="拉伸" />
            </Stack>
            <Stack $w={40}>
              <Small icon="rotate" label="旋轉" /><Small icon="mirror" label="鏡射" /><Small icon="scale" label="比例" />
            </Stack>
            <Stack $w={32}>
              <Small icon="trim" caret /><Small icon="fillet" caret /><Small icon="array" caret />
            </Stack>
            <Stack>
              <Small icon="eraser" /><Small icon="box3" /><Small icon="offset" />
            </Stack>
          </PanelBody>
          <Foot>修改</Foot>
        </Panel>
        <Panel>
          <PanelBody>
            <Big icon="textA" label="文字" caret w={32} />
            <Big icon="dim" label="標註" caret w={30} />
            <Stack>
              <Small icon="linear" caret /><Small icon="leader" caret /><Small icon="table" />
            </Stack>
          </PanelBody>
          <Foot>註解</Foot>
        </Panel>
        <Panel>
          <PanelBody>
            <Big icon="layers" label={<>圖層<br />性質</>} w={29} />
            <Stack $row={17} $w={152}>
              <Combo $h={13}>
                <Icon name="bulb" size={12} /><Icon name="sun" size={11} /><Icon name="unlock" size={12} /><Swatch $s={10} />
                <Select aria-label="圖層"><option>0</option></Select><Caret />
              </Combo>
              <Row>
                <Small icon="lyOff" /><Small icon="lyIso" /><Small icon="lyFrz" /><Small icon="lyLock" /><Small icon="lySet" label="設為目前的" />
              </Row>
              <Row>
                <Small icon="lyOn" /><Small icon="lyUniso" /><Small icon="lyThaw" /><Small icon="lyUnlock" /><Small icon="lyMatch" label="符合圖層" />
              </Row>
            </Stack>
          </PanelBody>
          <Foot>圖層</Foot>
        </Panel>
        <Panel>
          <PanelBody>
            <Big icon="insert" label="插入" caret />
            <Stack>
              <Small icon="create" /><Small icon="editBlock" /><Small icon="attr" caret />
            </Stack>
          </PanelBody>
          <Foot>圖塊</Foot>
        </Panel>
        <Panel>
          <PanelBody>
            <Big icon="match" label={<>複製<br />性質</>} />
            <Stack $row={16} $w={17}>
              <Small icon="wheel" /><Small icon="weights" /><Small icon="types" />
            </Stack>
            <Stack $row={16} $w={98}>
              <Combo $h={15}><Swatch $s={11} /><Select aria-label="物件顏色"><option>ByLayer</option></Select><Caret /></Combo>
              <Combo $h={12}><Stroke $w={45} /><Select aria-label="線粗"><option>ByLayer</option></Select><Caret /></Combo>
              <Combo $h={12}><Stroke $w={45} /><Select aria-label="線型"><option>ByLayer</option></Select><Caret /></Combo>
            </Stack>
          </PanelBody>
          <Foot launcher>性質</Foot>
        </Panel>
        <Panel>
          <PanelBody>
            <Big icon="group" label="群組" />
            <Stack $w={17}>
              <Small icon="ungroup" /><Small icon="groupEdit" /><Small icon="groupSel" boxed />
            </Stack>
          </PanelBody>
          <Foot>群組</Foot>
        </Panel>
        <Panel>
          <PanelBody>
            <Big icon="ruler" label="測量" caret w={35} />
            <Stack>
              <Small icon="quickSel" /><Small icon="selAll" /><Small icon="calc" />
            </Stack>
          </PanelBody>
          <Foot>公用程式</Foot>
        </Panel>
        <Panel>
          <PanelBody>
            <Big icon="paste" label="貼上" caret w={36} />
            <Stack>
              <Small icon="cut" /><Small icon="copyClip" />
            </Stack>
          </PanelBody>
          <Foot flat>剪貼簿</Foot>
        </Panel>
        <Panel>
          <PanelBody><Big icon="base" label="基準" caret w={41} /></PanelBody>
          <Foot launcher>視圖</Foot>
        </Panel>
      </Ribbon>

      <FileTabs>
        <FileTab><span>Drawing1*</span>
          <IconButton type="button" aria-label="關閉圖檔"><Svg $s={8} viewBox="0 0 8 8"><path d="M1 1l6 6M7 1L1 7" stroke={W} /></Svg></IconButton>
        </FileTab>
        <PlusTab type="button">+</PlusTab>
      </FileTabs>

      <Work>
        <Canvas>
          <Drawing />
          <ViewLabel>[−][上][2D 線架構]</ViewLabel>
          <ViewControls viewBox="0 0 40 12" fill="none" stroke="#555">
            <path d="M1.500 5.500h9v3h-9zM16.500 3.500h6v7h-6zM18.500 3V1.500h6v7h-2M18.500 5.500h2v3h-2z" />
            <path d="M30.500 1.500h2l2 2.500 2-2.500h2v2L36 6l2.500 2.500v2h-2l-2-2.500-2 2.500h-2v-2L33 6l-2.500-2.500z" />
          </ViewControls>
          <Compass>
            <span>北</span><span>西</span>
            <CubeFace type="button" aria-label="上">
              <Svg $s={20} viewBox="0 0 20 20"><path d="M10 4v11M14 9h1M14 14h2" stroke="#777" fill="none" /></Svg>
            </CubeFace>
            <span>東</span><span>南</span>
            <Wcs type="button">WCS <Caret /></Wcs>
          </Compass>
          <NavBar>
            <Svg $s={24} viewBox="0 0 24 24" fill="none" stroke="#d2d2d2">
              <circle cx="19" cy="4" r="2" /><path d="M6 22v-7h9v7" />
            </Svg>
            <Svg $s={24} viewBox="0 0 24 24" fill="none" stroke="#d2d2d2">
              <path d="M6 0v4h11M11 9h3M3 14.500h18M8 24c-5-6 0-8 2-4v-2h6v6" />
            </Svg>
            <Svg $s={24} viewBox="0 0 24 24" fill="none" stroke="#d2d2d2">
              <path d="M6 2c2 5 8 6 11 3V0M5 22l12-9M5 13l9 9" /><circle cx="17" cy="19" r="3" />
            </Svg>
            <Svg $s={24} viewBox="0 0 24 24" fill="none" stroke="#d2d2d2">
              <path d="M11 9l1 1 1-1M9 18l3-3 3 3v3h5v4h-5v3l-3 3-3-3v-3H4v-4h5z" />
            </Svg>
          </NavBar>
          <Ucs viewBox="0 0 66 56" stroke="#222" fill="none">
            <path d="M10.500 14v37.500H47M7.500 47.500h6v7h-6z" />
            <g stroke="none" fill="#222" fontFamily="Lato" fontWeight="300" fontSize="15">
              <text x="12" y="12">Y</text><text x="51" y="51">X</text>
            </g>
          </Ucs>
          <History><span>指令:</span><span>指令:</span><span>指令: _properties</span></History>
          <CommandLine onSubmit={(e) => e.preventDefault()}>
            <Grip>
              <GripDots viewBox="0 0 4 13"><path d="M.500 0v13M3.500 0v13" stroke="#d5d8dc" strokeDasharray="1 1" /></GripDots>
              <Svg $s={8} viewBox="0 0 8 8"><path d="M1 1l6 6M7 1L1 7" stroke="#fff" strokeWidth="1.400" /></Svg>
              <Svg $s={12} viewBox="0 0 12 12"><path d="M1 11l6-6" stroke="#fff" strokeWidth="2" /><path d="M11 3L9 5 7.500 3.500l2-2A3.300 3.300 0 0 0 6 5l1.500 1.500A3.300 3.300 0 0 0 11 3z" fill="#fff" /></Svg>
            </Grip>
            <Prompt type="button" aria-label="最近的指令">
              <Svg $s={13} viewBox="0 0 13 13"><path d="M.500 2.500h12v9H.500zM.500 4h12M3 6l2 1.500L3 9M6 9.500h3" fill="none" stroke="#888" /></Svg>
              <Caret $small />
            </Prompt>
            <CommandInput aria-label="指令" placeholder="鍵入指令" />
            <Up />
          </CommandLine>
        </Canvas>

        <Palette>
          <PaletteTitle>性質</PaletteTitle>
          <Selection>
            <SelectionBox $h={15}><Select aria-label="選取的物件"><option>未選取</option></Select><Caret /></SelectionBox>
            <IconButton type="button" aria-label="切換 PICKADD"><Icon name="pickAdd" size={12} /></IconButton>
            <IconButton type="button" aria-label="選取物件"><Icon name="target" size={12} /></IconButton>
            <IconButton type="button" aria-label="快速選取"><Icon name="targetF" size={12} /></IconButton>
          </Selection>
          <PaletteScroll>
            <Groups>
              <GroupHead type="button">一般 <Caret /></GroupHead>
              <PropTable rows={[
                ['顏色', <><SmallSwatch />ByLayer</>],
                ['圖層', '0'],
                ['線型', <><Stroke $w={43} />ByLayer</>],
                ['線型比例', '1.0000'],
                ['線粗', <><Stroke $w={43} />ByLayer</>],
                ['透明度', 'ByLayer'],
                ['厚度', '0.0000'],
              ]} />
              <GroupHead type="button">3D 視覺化 <CaretLeft /></GroupHead>
              <GroupHead type="button">出圖型式 <CaretLeft /></GroupHead>
              <GroupHead type="button">檢視 <Caret /></GroupHead>
              <PropTable dim rows={[['中心點 X', '2079.3270'], ['中心點 Y', '2471.0936'], ['中心點 Z', '0.0000']]} />
            </Groups>
            <Thumb />
          </PaletteScroll>
        </Palette>
      </Work>

      <Status>
        <LayoutTab type="button" $active>模型</LayoutTab>
        <LayoutTab type="button">布局1</LayoutTab>
        <LayoutTab type="button">布局2</LayoutTab>
        <LayoutTab type="button">+</LayoutTab>
        <Modes>
          <Mode type="button" $w={22}>模型</Mode>
          <Mode type="button" $on aria-label="格線"><Svg $s={12} viewBox="0 0 12 12"><path d="M3 0v12M6 0v12M9 0v12M0 3h12M0 6h12M0 9h12" stroke="#e8f1fa" /></Svg></Mode>
          <Mode type="button" aria-label="鎖點"><Svg $s={11} viewBox="0 0 11 11"><path d="M1 1.500h10M1 5.500h10M1 9.500h10" stroke={W} strokeWidth="1.500" strokeDasharray="1.500 2.500" /></Svg></Mode>
          <Mode type="button" $w={13} aria-label="鎖點選項"><Caret /></Mode>
          <Mode type="button" $w={19} aria-label="正交"><Svg $s={13} viewBox="0 0 13 13"><path d="M1.500 0v11.500H13M1.500 7.500h4v4" fill="none" stroke={W} /></Svg></Mode>
          <Mode type="button" $on aria-label="極座標追蹤"><Svg $s={13} viewBox="0 0 13 13"><path d="M10.500 9.500A5 5 0 1 1 9 2.500M6 7h7M6 7l5-5M9 5v4" fill="none" stroke="#e8f1fa" strokeWidth="1.200" /></Svg></Mode>
          <Mode type="button" $w={12} aria-label="極座標選項"><Caret /></Mode>
        </Modes>
        <IconButton type="button" aria-label="自訂"><Svg $s={12} viewBox="0 0 12 12"><path d="M5 5.500h7M5 9.500h7M5 13.500h7" stroke={W} /></Svg></IconButton>
      </Status>

      <Watermark href="#">
        <svg width="78" height="66" viewBox="0 0 78 66" aria-hidden="true">
          <path d="M37 9l16 6v34l-16 4z" fill="#d9dcdf" />
          <path d="M56 26l14 2-4 9-12 12z" fill="#cfd3d6" />
          <path d="M22 14l14-6v44H22z" fill="#1f4fa0" />
          <path d="M5 34l12-5v20H11z" fill="#1f4fa0" />
          <path d="M44 27l12-5v22l-12 7z" fill="#1f4fa0" />
          <path d="M17 29l3 3v18h-3zM56 22l3 3v17l-3 2z" fill="#c7ccd2" />
          <path d="M5 26C17 8 38-1 56 0c16 1 22 11 20 25h-4C73 12 66 6 54 5 36 3 18 12 5 26z" fill="#8cc21f" />
          <path d="M4 31c-3 11 2 19 14 21 22 3 45-9 58-26-4 20-29 36-52 35C4 60-4 48 4 31z" fill="#1b4a9c" />
        </svg>
        <Brand><strong>土木工程网</strong>www.civilcn.com</Brand>
      </Watermark>
    </Page>
  );
}
